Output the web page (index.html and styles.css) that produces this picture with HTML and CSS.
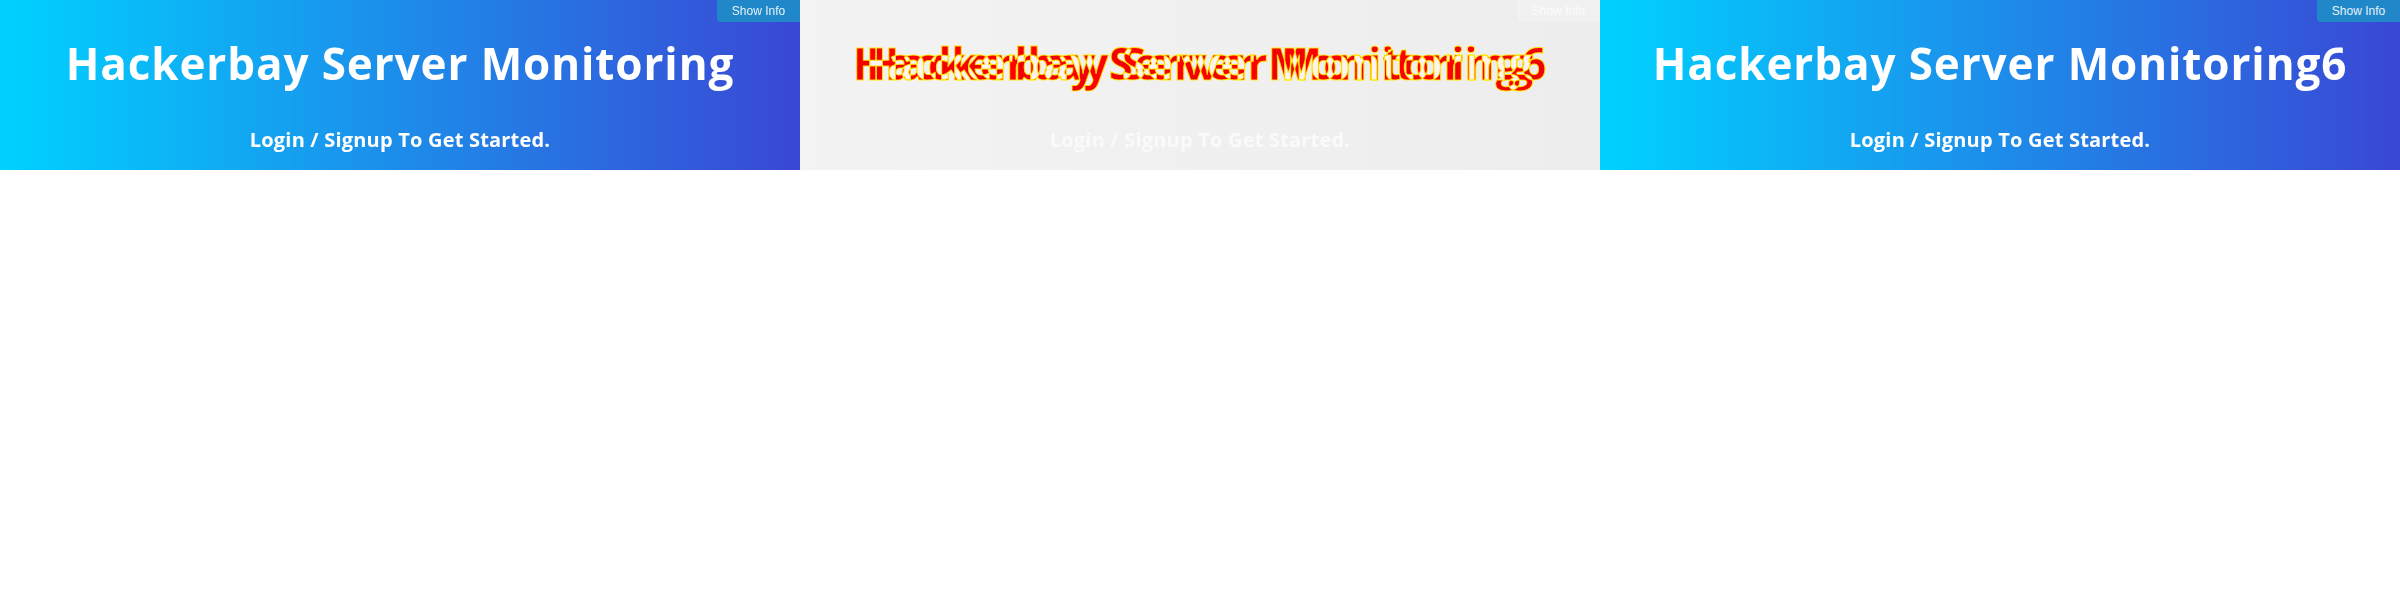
FILE: index.html
```html
<!DOCTYPE html>
<html lang="en">
<head>
<meta charset="utf-8">
<title>Visual diff</title>
<link rel="stylesheet" href="styles.css">
</head>
<body>
<div class="compare">
  <section class="panel hero">
    <button class="info-btn">Show Info</button>
    <h1 class="title">Hackerbay Server Monitoring</h1>
    <p class="subtitle">Login / Signup To Get Started.</p>
  </section>
  <section class="panel diff">
    <button class="info-btn">Show Info</button>
    <div class="diff-title">
      <h1 class="title old">Hackerbay Server Monitoring</h1>
      <h1 class="title new">Hackerbay Server Monitoring6</h1>
      <div class="edge" aria-hidden="true">Hackerbay Server Monitoring</div>
      <div class="edge" aria-hidden="true">Hackerbay Server Monitoring6</div>
    </div>
    <p class="subtitle">Login / Signup To Get Started.</p>
  </section>
  <section class="panel hero">
    <button class="info-btn">Show Info</button>
    <h1 class="title">Hackerbay Server Monitoring6</h1>
    <p class="subtitle">Login / Signup To Get Started.</p>
  </section>
</div>
</body>
</html>
```
FILE: styles.css
```css
html, body {
  margin: 0;
  padding: 0;
  background: #ffffff;
}

.compare {
  display: flex;
  width: 2400px;
}

.panel {
  position: relative;
  width: 800px;
  height: 170px;
  box-sizing: border-box;
  padding-top: 37px;
  display: flex;
  flex-direction: column;
  align-items: center;
  font-family: "Open Sans", "Liberation Sans", sans-serif;
  color: #ffffff;
  overflow: hidden;
}

.hero {
  background: linear-gradient(to right, #00d2ff, #3a47d5);
}

.diff {
  background: linear-gradient(to right, #f3f3f3, #ededed);
}

.title,
.edge {
  margin: 0;
  font-size: 44px;
  line-height: 52px;
  font-weight: 700;
  letter-spacing: 0.9px;
  white-space: nowrap;
  text-align: center;
}

.subtitle {
  margin: 38px 0 0;
  font-size: 20px;
  line-height: 26px;
  font-weight: 700;
  letter-spacing: 0.2px;
  white-space: nowrap;
}

.info-btn {
  position: absolute;
  top: 0;
  right: 0;
  width: 83px;
  height: 22px;
  padding: 0;
  border: 0;
  border-bottom-left-radius: 4px;
  background: #2088c9;
  color: #e8f1f9;
  font-family: "Liberation Sans", Arial, sans-serif;
  font-size: 12px;
  line-height: 22px;
  text-align: center;
}

.diff .info-btn {
  background: #f1f1f1;
  color: #fbfbfb;
}

.diff .subtitle {
  color: #fafafa;
}

.diff-title {
  position: relative;
  width: 100%;
  display: flex;
  justify-content: center;
}

.diff-title .old {
  color: #ff0000;
}

.diff-title .new {
  position: absolute;
  top: 0;
  left: 0;
  right: 0;
  color: rgb(0, 242, 242);
  mix-blend-mode: difference;
}

.diff-title .edge {
  position: absolute;
  top: 0;
  left: 0;
  right: 0;
  color: transparent;
  -webkit-text-stroke: 1px #ffee00;
  opacity: 0.85;
}
```
